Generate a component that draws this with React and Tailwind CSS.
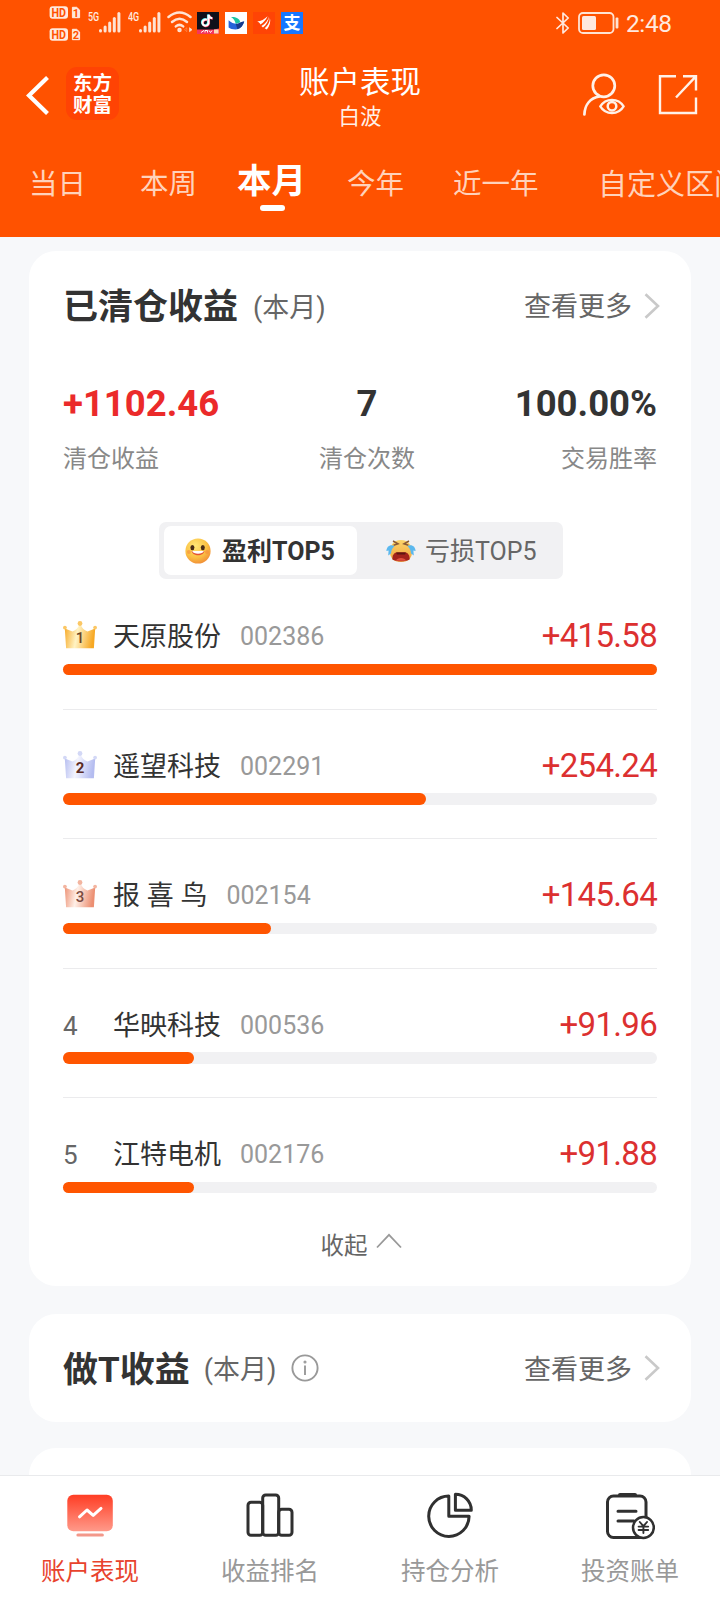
import React from "react";

const STOCKS = [
  { rank: 1, name: "天原股份", code: "002386", gain: "+415.58", width: 100 },
  { rank: 2, name: "遥望科技", code: "002291", gain: "+254.24", width: 61.1 },
  { rank: 3, name: "报 喜 鸟", code: "002154", gain: "+145.64", width: 35 },
  { rank: 4, name: "华映科技", code: "000536", gain: "+91.96", width: 22.1 },
  { rank: 5, name: "江特电机", code: "002176", gain: "+91.88", width: 22.1 },
];

const CROWNS = {
  1: { edge: "#f7a823", mid: "#fff3c4", tip: "#fbc765", text: "#6b4326", weight: 500 },
  2: { edge: "#b4bcf0", mid: "#f3f4fe", tip: "#d3d8f6", text: "#5b2b25", weight: 700 },
  3: { edge: "#ec8f72", mid: "#fff0e8", tip: "#f3b5a0", text: "#7a4a40", weight: 500 },
};

function Crown({ rank }) {
  const c = CROWNS[rank];
  const id = "crown" + rank;
  return (
    <svg className="h-[28px] w-[34px]" viewBox="0 0 34 28">
      <defs>
        <linearGradient id={id} x1="0" x2="1" y1="0" y2="0.15">
          <stop offset="0" stopColor={c.edge} />
          <stop offset="0.45" stopColor={c.mid} />
          <stop offset="1" stopColor={c.edge} />
        </linearGradient>
      </defs>
      <path d="M1.8 7.4 L9.5 10.4 C13 9 15.4 6.5 16.2 3.4 H17.8 C18.6 6.5 21 9 24.5 10.4 L32.2 7.4 L30.9 27.2 H3.1 Z" fill={"url(#" + id + ")"} />
      <circle cx="1.9" cy="6.6" r="1.9" fill={c.tip} />
      <circle cx="17" cy="2.5" r="2.4" fill={c.tip} />
      <circle cx="32.1" cy="6.6" r="1.9" fill={c.tip} />
      <text x="17" y="22.4" textAnchor="middle" fontSize="15" fontWeight={c.weight} fill={c.text}>{rank}</text>
    </svg>
  );
}

function Signal() {
  return (
    <svg className="h-[21px] w-[22px]" viewBox="0 0 22 21" fill="#ffe3d3">
      <rect x="0" y="17" width="3" height="3.5" rx="1.5" />
      <rect x="4.6" y="13.5" width="3" height="7" rx="1.5" />
      <rect x="9.2" y="9.5" width="3" height="11" rx="1.5" />
      <rect x="13.8" y="5" width="3" height="15.5" rx="1.5" />
      <rect x="18.4" y="0" width="3" height="20.5" rx="1.5" />
    </svg>
  );
}

function HdBadge({ n }) {
  return (
    <svg className="h-[13px] w-[32px]" viewBox="0 0 32 13">
      <rect x="0.6" y="0.3" width="18.4" height="12.4" rx="3" fill="#ffe9dc" />
      <text x="9.8" y="11" textAnchor="middle" fontSize="12.5" fontWeight="700" textLength="14.5" lengthAdjust="spacingAndGlyphs" fill="#ff5200">HD</text>
      <path d="M23.4 1.3 H27.6 L30.6 4 V11.7 H23.4 Z" fill="#ffe9dc" stroke="#ffe9dc" strokeLinejoin="round" />
      <text x="27" y="10.6" textAnchor="middle" fontSize="11" fontWeight="700" fill="#ff5200">{n}</text>
    </svg>
  );
}

function StatusBar() {
  return (
    <div className="flex h-[46px] items-start pl-[49px] text-[#ffe9df]">
      <div className="mt-[6px] flex flex-col gap-[9px]">
        <HdBadge n="1" />
        <HdBadge n="2" />
      </div>
      <span className="mt-[11px] ml-[7px] w-[11px] origin-left scale-x-[0.72] text-[12.5px] leading-[12px] font-medium">5G</span>
      <div className="mt-[12px]"><Signal /></div>
      <span className="mt-[11px] ml-[7px] w-[11px] origin-left scale-x-[0.72] text-[12.5px] leading-[12px] font-medium">4G</span>
      <div className="mt-[12px]"><Signal /></div>
      <svg className="mt-[11px] ml-[6px] h-[22px] w-[26px]" viewBox="0 0 26 22" fill="none" stroke="#ffe3d3" strokeWidth="2.5" strokeLinecap="round">
        <path d="M1.5 6 Q12.5 -3 23.5 6" />
        <path d="M5 11 Q12.5 4.5 20 11" />
        <path d="M8.8 15.4 Q12.5 12.4 16.2 15.4" />
        <circle cx="12.5" cy="19" r="1" />
        <path d="M19.5 17 L17.5 18.7 L19.5 20.4 Z" strokeWidth="0.5" opacity="0.5" />
        <path d="M22.8 17 L25 18.7 L22.8 20.4 Z" strokeWidth="0.8" fill="#ffe3d3" />
      </svg>
      <svg className="mt-[12px] ml-[4px] h-[22px] w-[22px]" viewBox="0 0 22 22">
        <rect width="22" height="22" fill="#10101a" />
        <g fill="none" strokeWidth="2.1">
          <path d="M9.4 7.4 A3.1 3.1 0 1 0 11 11 V2.4 C11.3 4.6 12.6 5.8 14.8 6" stroke="#25e5e5" />
          <path d="M10.4 8.2 A3.1 3.1 0 1 0 12 11.8 V3 C12.3 5.2 13.6 6.4 15.8 6.6" stroke="#fe2c55" />
          <path d="M9.9 7.8 A3.1 3.1 0 1 0 11.5 11.4 V2.7 C11.8 4.9 13.1 6.1 15.3 6.3" stroke="#fff" />
        </g>
        <path d="M0 17.4 H17 L22 16.6 V22 H0 Z" fill="#f5365c" />
        <path d="M4 20.5 L7 18.4 M8 20.5 V18.5 H10.5 V20.5 M12 18.5 L13.5 20.5 L15 18.5" stroke="#fff" strokeWidth="1" fill="none" />
        <rect x="17" y="17.5" width="4.5" height="4" fill="#ffd8b8" />
      </svg>
      <svg className="mt-[12px] ml-[6px] h-[22px] w-[22px]" viewBox="0 0 22 22">
        <rect width="22" height="22" fill="#fff" />
        <path d="M6 5 C10 4.6 14.5 6 15.3 10.2 L10.8 12 C10 8.6 8.5 6.4 6 5 Z" fill="#1cc5a0" />
        <path d="M3.6 8.2 C7 11.2 11 12.8 14.8 11.2 C16.5 10.4 17.6 9.8 19.2 9.6 C17.8 14.6 14.6 17.4 10.6 17.4 C7.6 17.4 5 16.4 3.6 15.4 Z" fill="#2563d9" />
        <path d="M10.8 12.1 C13.6 12.4 15.5 9.2 19.2 9.6 C18 13.8 15.6 16.6 12.4 17.2 Z" fill="#173a8c" />
      </svg>
      <svg className="mt-[12px] ml-[6px] h-[22px] w-[22px]" viewBox="0 0 22 22">
        <rect width="22" height="22" fill="#ff4405" />
        <path d="M4.2 9.6 C8 9.2 11.4 7.2 14.6 4.2 C12.8 8 10.4 10.6 7.4 12.4 C6.6 11 5.6 10.2 4.2 9.6 Z" fill="#fff" />
        <path d="M15.8 4.4 C15 8.6 12.2 11.8 8.4 14 L10 15.4 C13.6 12.4 15.8 8.8 15.8 4.4 Z" fill="#fff" />
        <path d="M16.8 5.2 C17.2 9.6 15 13.4 11.6 16.2 L13.8 17.6 C16.8 14 18 9.4 16.8 5.2 Z" fill="#fff" />
      </svg>
      <div className="mt-[12px] ml-[6px] flex h-[22px] w-[22px] items-center justify-center bg-[#1677ff] pt-[1px] text-[17px] leading-none font-bold text-white">支</div>

      <svg className="mt-[12px] ml-auto h-[22px] w-[14px]" viewBox="0 0 14 22" fill="none" stroke="#ffe9df" strokeWidth="1.7" strokeLinejoin="round" strokeLinecap="round">
        <path d="M1 5.5 L12.2 16 L7 21 V1 L12.2 6 L1 16.5" />
      </svg>
      <svg className="mt-[12px] ml-[8px] h-[22px] w-[42px]" viewBox="0 0 42 22">
        <rect x="1" y="1" width="34.5" height="20" rx="4" fill="none" stroke="#ffe3d3" strokeWidth="1.8" />
        <rect x="4" y="4" width="14" height="14" rx="1.5" fill="#ffe9df" />
        <rect x="37.6" y="5.5" width="2.8" height="11" rx="1" fill="#ffe3d3" />
      </svg>
      <span className="mt-[10px] mr-[48px] ml-[6px] w-[46px] text-[24.5px] leading-[27px] tracking-[-0.4px]">2:48</span>
    </div>
  );
}

function TitleBar() {
  return (
    <div className="flex h-[94px] text-white">
      <div className="flex w-[240px] items-start pl-[26px]">
        <svg className="mt-[30px] h-[39px] w-[24px]" viewBox="0 0 24 39" fill="none" stroke="#fff" strokeWidth="4.2">
          <path d="M21.5 1.5 L3 19.5 L21.5 37.5" />
        </svg>
        <div className="mt-[21px] ml-[16px] flex h-[53px] w-[53px] flex-col items-center justify-center rounded-[11px] bg-[#ff4304] pt-[3px] text-[19.5px] leading-[22px] font-bold">
          <span>东方</span>
          <span>财富</span>
        </div>
      </div>
      <div className="flex w-[240px] flex-col items-center pt-[17px]">
        <h1 className="text-[30.5px] leading-[40px]">账户表现</h1>
        <p className="text-[21.5px] leading-[28px] text-[#fff0e8]">白波</p>
      </div>
      <div className="flex w-[240px] items-start justify-end pr-[22px]">
        <svg className="mt-[27px] h-[43px] w-[43px]" viewBox="0 0 43 43" fill="none" stroke="#fff1e8" strokeWidth="2.7">
          <circle cx="21.8" cy="12.8" r="11" />
          <path d="M2.4 41.5 C2.7 32 8 25.2 17.5 23.4" strokeLinecap="round" />
          <path d="M18.3 33.4 C23.5 24.6 36.5 24.6 41.6 33.4 C36.5 42.2 23.5 42.2 18.3 33.4 Z" strokeWidth="2.3" />
          <circle cx="30" cy="33.2" r="4.3" strokeWidth="2.5" />
        </svg>
        <svg className="mt-[28px] ml-[33px] h-[41px] w-[40px]" viewBox="0 0 40 41" fill="none" stroke="#fff1e8" strokeWidth="2.4">
          <path d="M18 2.2 H2 V39 H38 V23.5" />
          <path d="M25 2.2 H38 V16.5 M37.6 2.6 L18 23.5" />
        </svg>
      </div>
    </div>
  );
}

function Tabs() {
  return (
    <div className="flex h-[97px] overflow-hidden pl-[29px] text-[28.5px] leading-[40px] whitespace-nowrap text-[#ffd2bb]">
      <span className="mt-[24.5px] w-[111px] shrink-0">当日</span>
      <span className="mt-[24.5px] w-[97px] shrink-0">本周</span>
      <div className="mt-[20.5px] flex w-[110px] shrink-0 flex-col">
        <span className="text-[34.5px] leading-[40px] font-bold text-white">本月</span>
        <span className="mt-[4.5px] ml-[23px] h-[6px] w-[25px] rounded-full bg-white" />
      </div>
      <span className="mt-[24.5px] w-[106px] shrink-0">今年</span>
      <span className="mt-[24.5px] w-[145px] shrink-0">近一年</span>
      <span className="mt-[24.5px] shrink-0 text-[29px]">自定义区间</span>
    </div>
  );
}

function More() {
  return (
    <div className="flex items-center text-[27px] leading-[40px] text-[#666]">
      <span className="pt-[3px]">查看更多</span>
      <svg className="ml-[12px] h-[26px] w-[17px]" viewBox="0 0 17 26" fill="none" stroke="#c9c9c9" strokeWidth="2.6">
        <path d="M1.5 1.2 L14 13 L1.5 24.8" />
      </svg>
    </div>
  );
}

function HappyFace() {
  return (
    <svg className="h-[26px] w-[26px]" viewBox="0 0 26 26">
      <defs>
        <radialGradient id="happy" cx="0.4" cy="0.3" r="0.75">
          <stop offset="0" stopColor="#ffe777" />
          <stop offset="0.6" stopColor="#fbc143" />
          <stop offset="1" stopColor="#f08a35" />
        </radialGradient>
      </defs>
      <circle cx="13" cy="13" r="12.6" fill="url(#happy)" />
      <ellipse cx="7.4" cy="9.6" rx="2" ry="2.7" fill="#4a2c16" />
      <ellipse cx="17.8" cy="9.6" rx="2" ry="2.7" fill="#4a2c16" />
      <circle cx="3.9" cy="14" r="2" fill="#f58b3c" opacity="0.6" />
      <circle cx="22" cy="14" r="2" fill="#f58b3c" opacity="0.6" />
      <path d="M6.6 13 H19.4 C18.8 18.6 7.4 18.6 6.6 13 Z" fill="#e5532f" />
      <path d="M7.2 13 H18.8 C18 16.6 8 16.6 7.2 13 Z" fill="#fff" />
    </svg>
  );
}

function CryFace() {
  return (
    <svg className="h-[24px] w-[30px]" viewBox="0 0 30 24">
      <defs>
        <linearGradient id="cry" x1="0" x2="0" y1="0" y2="1">
          <stop offset="0" stopColor="#fcd56b" />
          <stop offset="1" stopColor="#f0a23c" />
        </linearGradient>
      </defs>
      <path d="M15 1 C23 1 26 7 26 13 C26 20 21 23 15 23 C9 23 4 20 4 13 C4 7 7 1 15 1 Z" fill="url(#cry)" />
      <path d="M7 2 L12 4.8 L7.6 6.2 M23 2 L18 4.8 L22.4 6.2" fill="none" stroke="#8a5a35" strokeWidth="1.5" />
      <path d="M6.4 20.4 C6 16 8.6 13.2 11.4 13.2 H18.6 C21.4 13.2 24 16 23.6 20.4 C20 22.8 10 22.8 6.4 20.4 Z" fill="#a3221b" />
      <path d="M10 13.6 H20 L19 15.6 H11 Z" fill="#5e1512" />
      <path d="M10 21.8 C11 18 19 18 20 21.8 Z" fill="#e0503d" />
      <path d="M8.6 7 C4 5 0.6 7.6 0.4 12 L2.6 11.4 L2.2 16.4 L5 14.6 C5.2 11.6 6 9.4 8.6 7 Z" fill="#5bb8ee" />
      <path d="M21.4 7 C26 5 29.4 7.6 29.6 12 L27.4 11.4 L27.8 16.4 L25 14.6 C24.8 11.6 24 9.4 21.4 7 Z" fill="#5bb8ee" />
    </svg>
  );
}

function StockRow({ stock, last }) {
  return (
    <li className={last ? "h-[129.5px] pt-[36px]" : "h-[129.5px] border-b border-[#ebebed] pt-[36px]"}>
      <div className="flex h-[40px] items-start leading-[40px]">
        <div className="w-[50px] shrink-0 text-[26px] text-[#666]">
          {stock.rank <= 3 ? <div className="pt-[5px]"><Crown rank={stock.rank} /></div> : <div className="pt-[1px]">{stock.rank}</div>}
        </div>
        <span className="pt-[1px] text-[27px] text-[#333]">{stock.name}</span>
        <span className="ml-[19px] pt-[1px] text-[25px] text-[#999]">{stock.code}</span>
        <span className="ml-auto text-[33px] tracking-[-0.7px] text-[#dc3030]">{stock.gain}</span>
      </div>
      <div className="mt-[7.5px] h-[11.5px] rounded-full bg-[#f1f1f3]">
        <div className="h-full rounded-full bg-[#ff5500]" style={{ width: stock.width + "%" }} />
      </div>
    </li>
  );
}

function ClosedCard() {
  return (
    <section className="h-[1035px] shrink-0 rounded-[27px] bg-white px-[34px]">
      <div className="flex h-[108px] items-center justify-between">
        <div className="flex items-center pt-[5px]">
          <h2 className="text-[35px] leading-[40px] font-bold text-[#333]">已清仓收益</h2>
          <span className="ml-[15px] text-[27px] leading-[40px] text-[#666]">(本月)</span>
        </div>
        <div className="-mr-[4px] pt-[1px]"><More /></div>
      </div>
      <div className="flex justify-between pt-[25px] text-[#333]">
        <div>
          <p className="text-[36.5px] leading-[40px] font-bold text-[#eb2a2a]">+1102.46</p>
          <p className="mt-[15px] text-[24px] leading-[40px] text-[#888]">清仓收益</p>
        </div>
        <div className="text-center">
          <p className="text-[36.5px] leading-[40px] font-bold">7</p>
          <p className="mt-[15px] text-[24px] leading-[40px] text-[#888]">清仓次数</p>
        </div>
        <div className="text-right">
          <p className="text-[36.5px] leading-[40px] font-bold">100.00%</p>
          <p className="mt-[15px] text-[24px] leading-[40px] text-[#888]">交易胜率</p>
        </div>
      </div>
      <div className="mt-[43px] ml-[96px] flex h-[57px] w-[404px] items-center rounded-[7px] bg-[#f1f1f3] px-[5px] text-[25px] leading-[40px]">
        <div className="flex h-[49px] w-[193px] items-center rounded-[7px] bg-white pl-[21px] font-bold text-[#333]">
          <HappyFace />
          <span className="ml-[11px] pt-[3.5px]">盈利TOP5</span>
        </div>
        <div className="flex items-center pl-[29px] text-[#666]">
          <CryFace />
          <span className="ml-[9px] pt-[3.5px]">亏损TOP5</span>
        </div>
      </div>
      <ul className="mt-[1px]">
        {STOCKS.map((s) => <StockRow key={s.rank} stock={s} last={s.rank === 5} />)}
      </ul>
      <div className="-mt-[2px] flex items-start justify-center pl-[2px] text-[23.5px] leading-[40px] text-[#666]">
        <span>收起</span>
        <svg className="mt-[7px] ml-[8px] h-[16px] w-[26px]" viewBox="0 0 26 16" fill="none" stroke="#999" strokeWidth="1.8">
          <path d="M1 14.5 L13 1.8 L25 14.5" />
        </svg>
      </div>
    </section>
  );
}

function DayTradeCard() {
  return (
    <section className="mt-[28px] flex h-[108px] shrink-0 items-center justify-between rounded-[27px] bg-white pr-[30px] pl-[34px]">
      <div className="flex items-center">
        <h2 className="pt-[5px] text-[35px] leading-[40px] font-bold text-[#333]">做T收益</h2>
        <span className="ml-[14px] pt-[4px] text-[27px] leading-[40px] text-[#666]">(本月)</span>
        <svg className="ml-[15px] h-[28px] w-[28px]" viewBox="0 0 28 28" fill="none" stroke="#999" strokeWidth="1.9">
          <circle cx="14" cy="14" r="12.6" />
          <path d="M14 11.5 V21" />
          <circle cx="14" cy="8" r="0.6" />
        </svg>
      </div>
      <More />
    </section>
  );
}

function BottomNav() {
  return (
    <nav className="grid h-[125px] shrink-0 grid-cols-4 border-t border-[#e9eaec] bg-white text-[24.5px] leading-[36px] text-[#999]">
      <div className="flex flex-col items-center pt-[16px] text-[#e8432d]">
        <svg className="h-[48px] w-[50px]" viewBox="0 0 50 48">
          <defs>
            <linearGradient id="screen" x1="0" x2="0" y1="0" y2="1">
              <stop offset="0" stopColor="#ff3d24" />
              <stop offset="1" stopColor="#ff9a8a" />
            </linearGradient>
          </defs>
          <rect x="2.3" y="2.8" width="45.5" height="36.5" rx="6" fill="url(#screen)" />
          <rect x="11.4" y="41.4" width="27.5" height="3.2" rx="1.5" fill="#f3988a" />
          <path d="M14.5 24.8 L22 18 L28.2 23.4 L36 16.4" fill="none" stroke="#fff" strokeWidth="3" strokeLinecap="round" strokeLinejoin="round" />
        </svg>
        <span className="mt-[13.5px]">账户表现</span>
      </div>
      <div className="flex flex-col items-center pt-[16px]">
        <svg className="h-[48px] w-[50px]" viewBox="0 0 50 48" fill="none" stroke="#303030" strokeWidth="3">
          <rect x="3" y="10.2" width="14.7" height="33" rx="3" />
          <rect x="17.7" y="3" width="16" height="40.2" rx="3" />
          <rect x="33.7" y="17.3" width="13.3" height="25.9" rx="3" />
        </svg>
        <span className="mt-[13.5px]">收益排名</span>
      </div>
      <div className="flex flex-col items-center pt-[16px]">
        <svg className="h-[48px] w-[50px]" viewBox="0 0 50 48" fill="none" stroke="#303030" strokeWidth="3" strokeLinejoin="round">
          <path d="M23.8 4 A20.2 20.2 0 1 0 44.1 24.3 H23.8 Z" />
          <path d="M30.4 2.3 V18.3 H46.3 C46.3 9.3 39.2 2.3 30.4 2.3 Z" />
        </svg>
        <span className="mt-[13.5px]">持仓分析</span>
      </div>
      <div className="flex flex-col items-center pt-[16px]">
        <svg className="h-[48px] w-[50px]" viewBox="0 0 50 48" fill="none" stroke="#303030" strokeWidth="3" strokeLinecap="round">
          <rect x="2.5" y="4" width="38.5" height="41.5" rx="6" />
          <path d="M15 3 H30" strokeWidth="4" />
          <path d="M13 19.2 H31 M13 29 H29" />
          <circle cx="38.4" cy="35.5" r="10.4" fill="#fff" strokeWidth="2.5" />
          <path d="M34.8 30 L38.4 34.2 L42 30 M38.4 34.2 V41 M33.6 34.6 H43.2 M33.6 38 H43.2" strokeWidth="1.9" />
        </svg>
        <span className="mt-[13.5px]">投资账单</span>
      </div>
    </nav>
  );
}

export default function App() {
  return (
    <div className="flex h-[1600px] w-[720px] flex-col overflow-hidden bg-[#f7f8fa] font-[Roboto,'Noto_Sans_CJK_SC',sans-serif]">
      <header className="h-[237px] shrink-0 bg-[#ff5200]">
        <StatusBar />
        <TitleBar />
        <Tabs />
      </header>
      <main className="flex h-[1238px] shrink-0 flex-col overflow-hidden px-[29px] pt-[14px]">
        <ClosedCard />
        <DayTradeCard />
        <section className="mt-[26px] h-[120px] shrink-0 rounded-[27px] bg-white" />
      </main>
      <BottomNav />
    </div>
  );
}
